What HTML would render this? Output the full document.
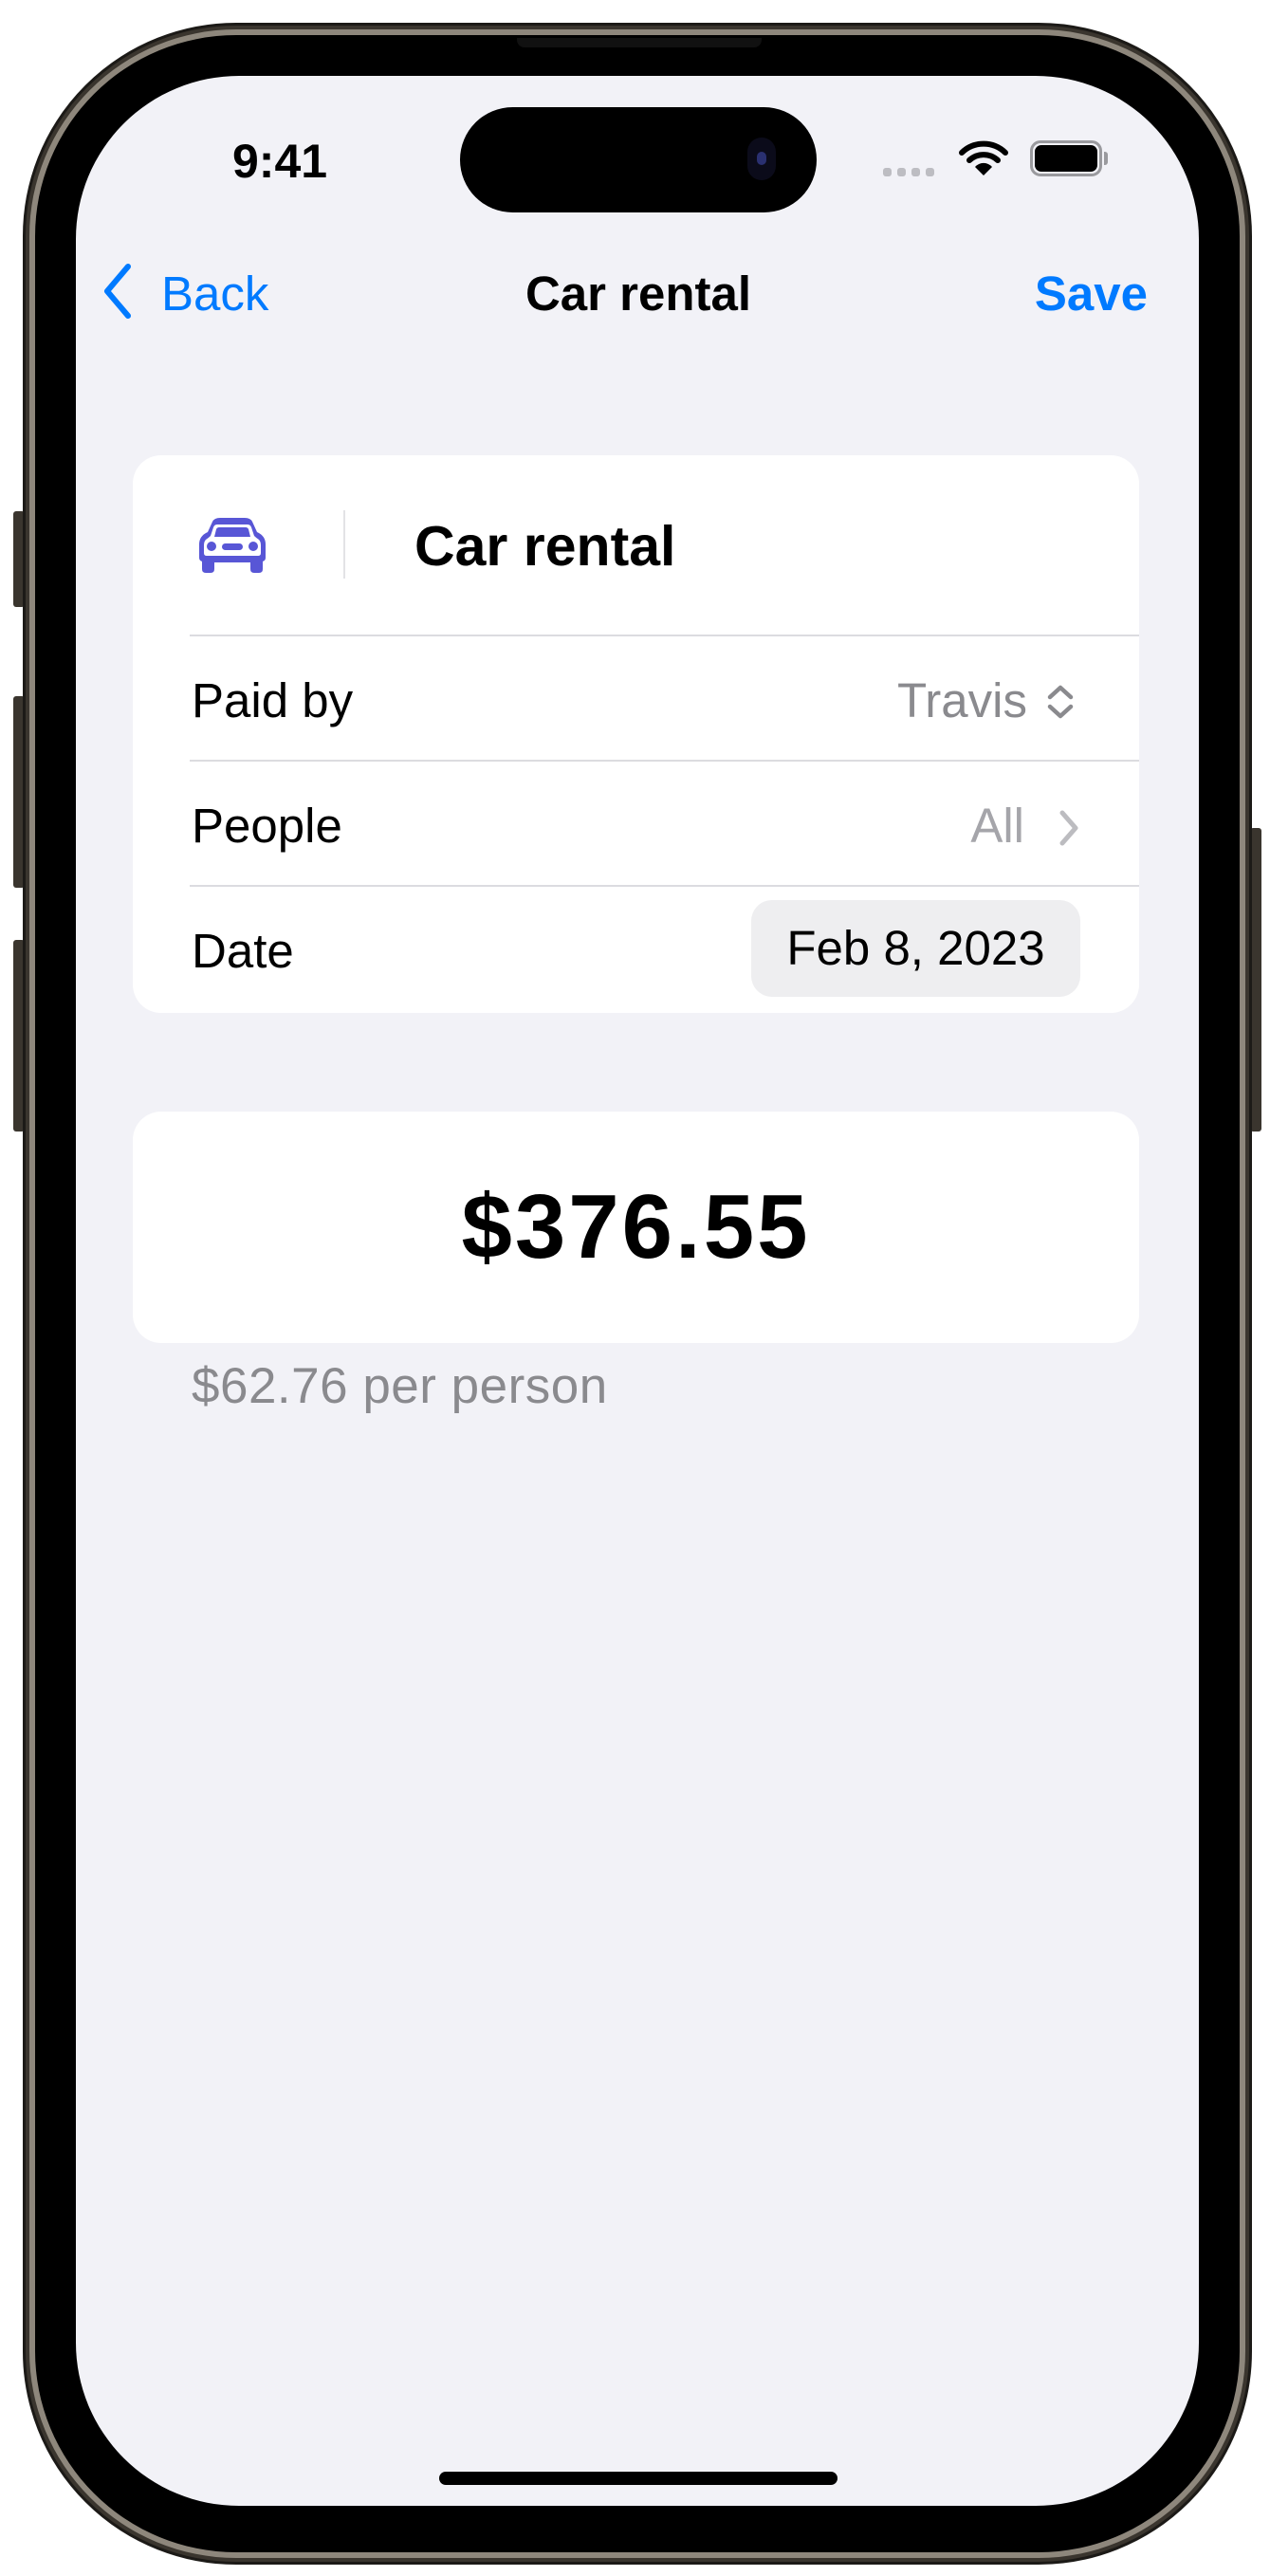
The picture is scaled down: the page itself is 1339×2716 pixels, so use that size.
<!DOCTYPE html>
<html><head><meta charset="utf-8"><style>
*{margin:0;padding:0;box-sizing:border-box}
body{width:1339px;height:2716px;background:#fff;position:relative;overflow:hidden;font-family:"Liberation Sans",sans-serif}
.abs{position:absolute}
.frame{left:24px;top:24px;width:1296px;height:2680px;border-radius:225px;background:#3a352e;border:3px solid #1c1a17}
.frame2{left:31px;top:31px;width:1282px;height:2666px;border-radius:218px;background:#8e877c}
.bezel{left:37px;top:37px;width:1270px;height:2654px;border-radius:212px;background:#000}
.screen{left:80px;top:80px;width:1184px;height:2562px;border-radius:172px;background:#f2f2f7;overflow:hidden}
.btn{background:#3a352e;border-radius:3px}
.card{background:#fff;border-radius:30px;left:60px;width:1061px}
.t{position:absolute;white-space:nowrap}
.sep{position:absolute;height:2px;background:#dcdce0;left:60px;right:0}
</style></head><body>
<div class="abs btn" style="left:14px;top:539px;width:12px;height:101px"></div>
<div class="abs btn" style="left:14px;top:734px;width:12px;height:202px"></div>
<div class="abs btn" style="left:14px;top:991px;width:12px;height:202px"></div>
<div class="abs btn" style="left:1318px;top:873px;width:12px;height:320px"></div>
<div class="abs frame"></div>
<div class="abs frame2"></div>
<div class="abs bezel"></div>
<div class="abs" style="left:545px;top:40px;width:258px;height:10px;background:#111;border-radius:0 0 8px 8px"></div>
<div class="abs screen">
  <div class="t" style="left:165px;top:60px;font-size:50px;font-weight:bold;color:#000;line-height:60px">9:41</div>
  <div class="abs" style="left:405px;top:33px;width:376px;height:111px;border-radius:56px;background:#000"></div>
  <div class="abs" style="left:708px;top:65px;width:30px;height:45px;border-radius:15px;background:#0b0b1a"></div>
  <div class="abs" style="left:718px;top:80px;width:10px;height:14px;border-radius:5px;background:#2a3070"></div>
  <div class="abs" style="left:851px;top:97px;width:56px;height:9px">
    <span class="abs" style="left:0;top:0;width:9px;height:9px;border-radius:3px;background:#bdbdc2"></span>
    <span class="abs" style="left:15px;top:0;width:9px;height:9px;border-radius:3px;background:#bdbdc2"></span>
    <span class="abs" style="left:30px;top:0;width:9px;height:9px;border-radius:3px;background:#bdbdc2"></span>
    <span class="abs" style="left:45px;top:0;width:9px;height:9px;border-radius:3px;background:#bdbdc2"></span>
  </div>
  <svg class="abs" style="left:931px;top:68px" width="52" height="38" viewBox="0 0 52 38">
    <path d="M3 13 A33 33 0 0 1 49 13" stroke="#000" stroke-width="6" fill="none" stroke-linecap="round"/>
    <path d="M11 21 A22 22 0 0 1 41 21" stroke="#000" stroke-width="6" fill="none" stroke-linecap="round"/>
    <path d="M26 37 L17 28 A12 12 0 0 1 35 28 Z" fill="#000"/>
  </svg>
  <div class="abs" style="left:1006px;top:68px;width:76px;height:38px;border:3px solid #9a9a9e;border-radius:11px"></div>
  <div class="abs" style="left:1011px;top:73px;width:66px;height:28px;background:#000;border-radius:7px"></div>
  <div class="abs" style="left:1084px;top:80px;width:4px;height:14px;background:#9a9a9e;border-radius:0 3px 3px 0"></div>
  <svg class="abs" style="left:25px;top:197px" width="40" height="60" viewBox="0 0 40 60">
    <path d="M30 4 L8 30 L30 56" stroke="#007aff" stroke-width="6" fill="none" stroke-linecap="round" stroke-linejoin="round"/>
  </svg>
  <div class="t" style="left:90px;top:200px;font-size:51px;color:#007aff;line-height:60px">Back</div>
  <div class="t" style="left:0;width:1186px;text-align:center;top:200px;font-size:51px;font-weight:bold;color:#000;line-height:60px">Car rental</div>
  <div class="t" style="right:54px;top:200px;font-size:51px;font-weight:bold;color:#007aff;line-height:60px">Save</div>
  <div class="abs card" style="top:400px;height:588px">
    <svg class="abs" style="left:70px;top:66px" width="70" height="58" viewBox="0 0 70 58">
      <path d="M14 4 Q16 0 22 0 L48 0 Q54 0 56 4 L61 15 Q70 19 70 28 L70 42 Q70 45 67 46 L67 54 Q67 58 63 58 L58 58 Q54 58 54 54 L54 47 L16 47 L16 54 Q16 58 12 58 L7 58 Q3 58 3 54 L3 46 Q0 45 0 42 L0 28 Q0 19 9 15 Z" fill="#5856d6"/>
      <path d="M19 7 L51 7 Q54 7 55 10 L58 19 Q60 21 63 23 Q65 25 65 29 L65 37 Q65 40 62 40 L8 40 Q5 40 5 37 L5 29 Q5 25 7 23 Q10 21 12 19 L15 10 Q16 7 19 7 Z" fill="#fff"/>
      <path d="M21 10 L49 10 Q51 10 52 12 L54 20 L16 20 L18 12 Q19 10 21 10 Z" fill="#5856d6"/>
      <circle cx="13" cy="30" r="5" fill="#5856d6"/>
      <circle cx="57" cy="30" r="5" fill="#5856d6"/>
      <rect x="24" y="27" width="22" height="7" rx="3.5" fill="#5856d6"/>
    </svg>
    <div class="abs" style="left:222px;top:58px;width:2px;height:72px;background:#e3e3e6"></div>
    <div class="t" style="left:297px;top:62px;font-size:59px;font-weight:bold;color:#000;line-height:68px">Car rental</div>
    <div class="sep" style="top:189px"></div>
    <div class="t" style="left:62px;top:229px;font-size:51px;color:#000;line-height:60px">Paid by</div>
    <div class="t" style="right:118px;top:229px;font-size:51px;color:#8a8a8e;line-height:60px">Travis</div>
    <svg class="abs" style="left:962px;top:241px" width="32" height="38" viewBox="0 0 32 38">
      <path d="M5 14 L16 4 L27 14 M5 24 L16 34 L27 24" stroke="#8a8a8e" stroke-width="4.5" fill="none" stroke-linecap="round" stroke-linejoin="round"/>
    </svg>
    <div class="sep" style="top:321px"></div>
    <div class="t" style="left:62px;top:361px;font-size:51px;color:#000;line-height:60px">People</div>
    <div class="t" style="right:121px;top:361px;font-size:51px;color:#a5a5aa;line-height:60px">All</div>
    <svg class="abs" style="left:974px;top:373px" width="26" height="40" viewBox="0 0 26 40">
      <path d="M6 4 L20 20 L6 36" stroke="#bcbcc0" stroke-width="5" fill="none" stroke-linecap="round" stroke-linejoin="round"/>
    </svg>
    <div class="sep" style="top:453px"></div>
    <div class="t" style="left:62px;top:493px;font-size:51px;color:#000;line-height:60px">Date</div>
    <div class="abs" style="left:652px;top:469px;width:347px;height:102px;border-radius:22px;background:#eeeef0"></div>
    <div class="t" style="left:652px;width:347px;text-align:center;top:490px;font-size:51px;color:#000;line-height:60px">Feb 8, 2023</div>
  </div>
  <div class="abs card" style="top:1092px;height:244px">
    <div class="t" style="left:0;width:1061px;text-align:center;top:70px;font-size:96px;letter-spacing:3px;font-weight:bold;color:#000;line-height:104px">$376.55</div>
  </div>
  <div class="t" style="left:122px;top:1352px;font-size:53px;letter-spacing:0.5px;color:#8a8a8e;line-height:60px">$62.76 per person</div>
  <div class="abs" style="left:383px;top:2526px;width:420px;height:14px;border-radius:7px;background:#000"></div>
</div>
</body></html>
